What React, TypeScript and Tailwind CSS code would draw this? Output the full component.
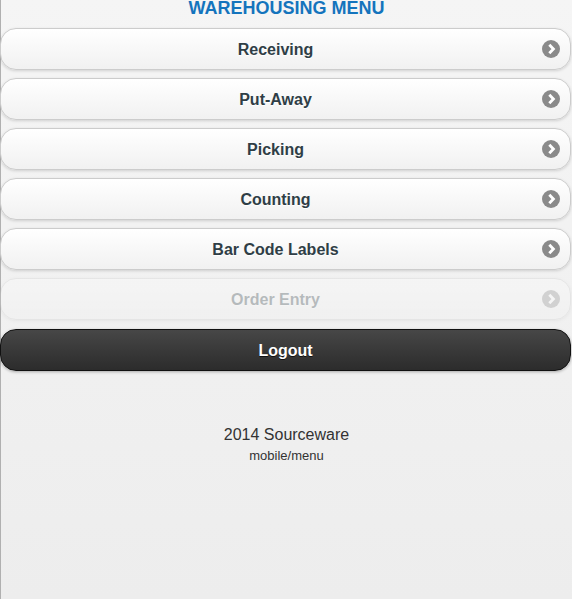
import React from "react";

const items = [
  { label: "Receiving", disabled: false },
  { label: "Put-Away", disabled: false },
  { label: "Picking", disabled: false },
  { label: "Counting", disabled: false },
  { label: "Bar Code Labels", disabled: false },
  { label: "Order Entry", disabled: true },
];

function Arrow() {
  return (
    <svg width="18" height="18" viewBox="0 0 18 18" className="absolute right-[10px] top-1/2 -translate-y-1/2">
      <circle cx="9" cy="9" r="9" fill="#8a8a8a" />
      <path d="M7.3 4.8 L11.4 9 L7.3 13.2" stroke="#fff" strokeWidth="2.8" fill="none" strokeLinecap="butt" strokeLinejoin="miter" />
    </svg>
  );
}

export default function App() {
  return (
    <div
      className="min-h-[600px] w-[572px] border-l border-[#b0b0b0] bg-gradient-to-b from-[#f5f5f5] to-[#ededed]"
      style={{ fontFamily: '"Liberation Sans", Arial, sans-serif' }}
    >
      <h1 className="text-center text-[18px] font-bold leading-[18px] text-[#1474bd] h-[28px] -mt-px">
        WAREHOUSING MENU
      </h1>
      <div className="flex flex-col gap-[8px] pr-[1px] -ml-px mt-px">
        {items.map((it) => (
          <div
            key={it.label}
            className={
              "relative flex h-[42px] items-center justify-center rounded-[16px] border border-[#cccccc] bg-gradient-to-b from-[#ffffff] to-[#f1f1f1] pl-[15px] pr-[35px] pt-[2px] shadow-[0_1px_3px_rgba(0,0,0,0.15)] " +
              (it.disabled ? "opacity-30" : "")
            }
          >
            <span className="text-[16px] font-bold text-[#2f3e46] [text-shadow:0_1px_0_#fff]">{it.label}</span>
            <Arrow />
          </div>
        ))}
        <div className="relative mt-px flex h-[42px] items-center justify-center rounded-[16px] border border-[#111] bg-gradient-to-b from-[#474747] to-[#2c2c2c] pt-[2px] shadow-[0_1px_3px_rgba(0,0,0,0.3)]">
          <span className="text-[16px] font-bold text-white [text-shadow:0_1px_0_#111]">Logout</span>
        </div>
      </div>
      <div className="mt-[53px] text-center text-[#333]">
        <div className="text-[16px] leading-[22px]">2014 Sourceware</div>
        <div className="text-[13px] leading-[20px]">mobile/menu</div>
      </div>
    </div>
  );
}
